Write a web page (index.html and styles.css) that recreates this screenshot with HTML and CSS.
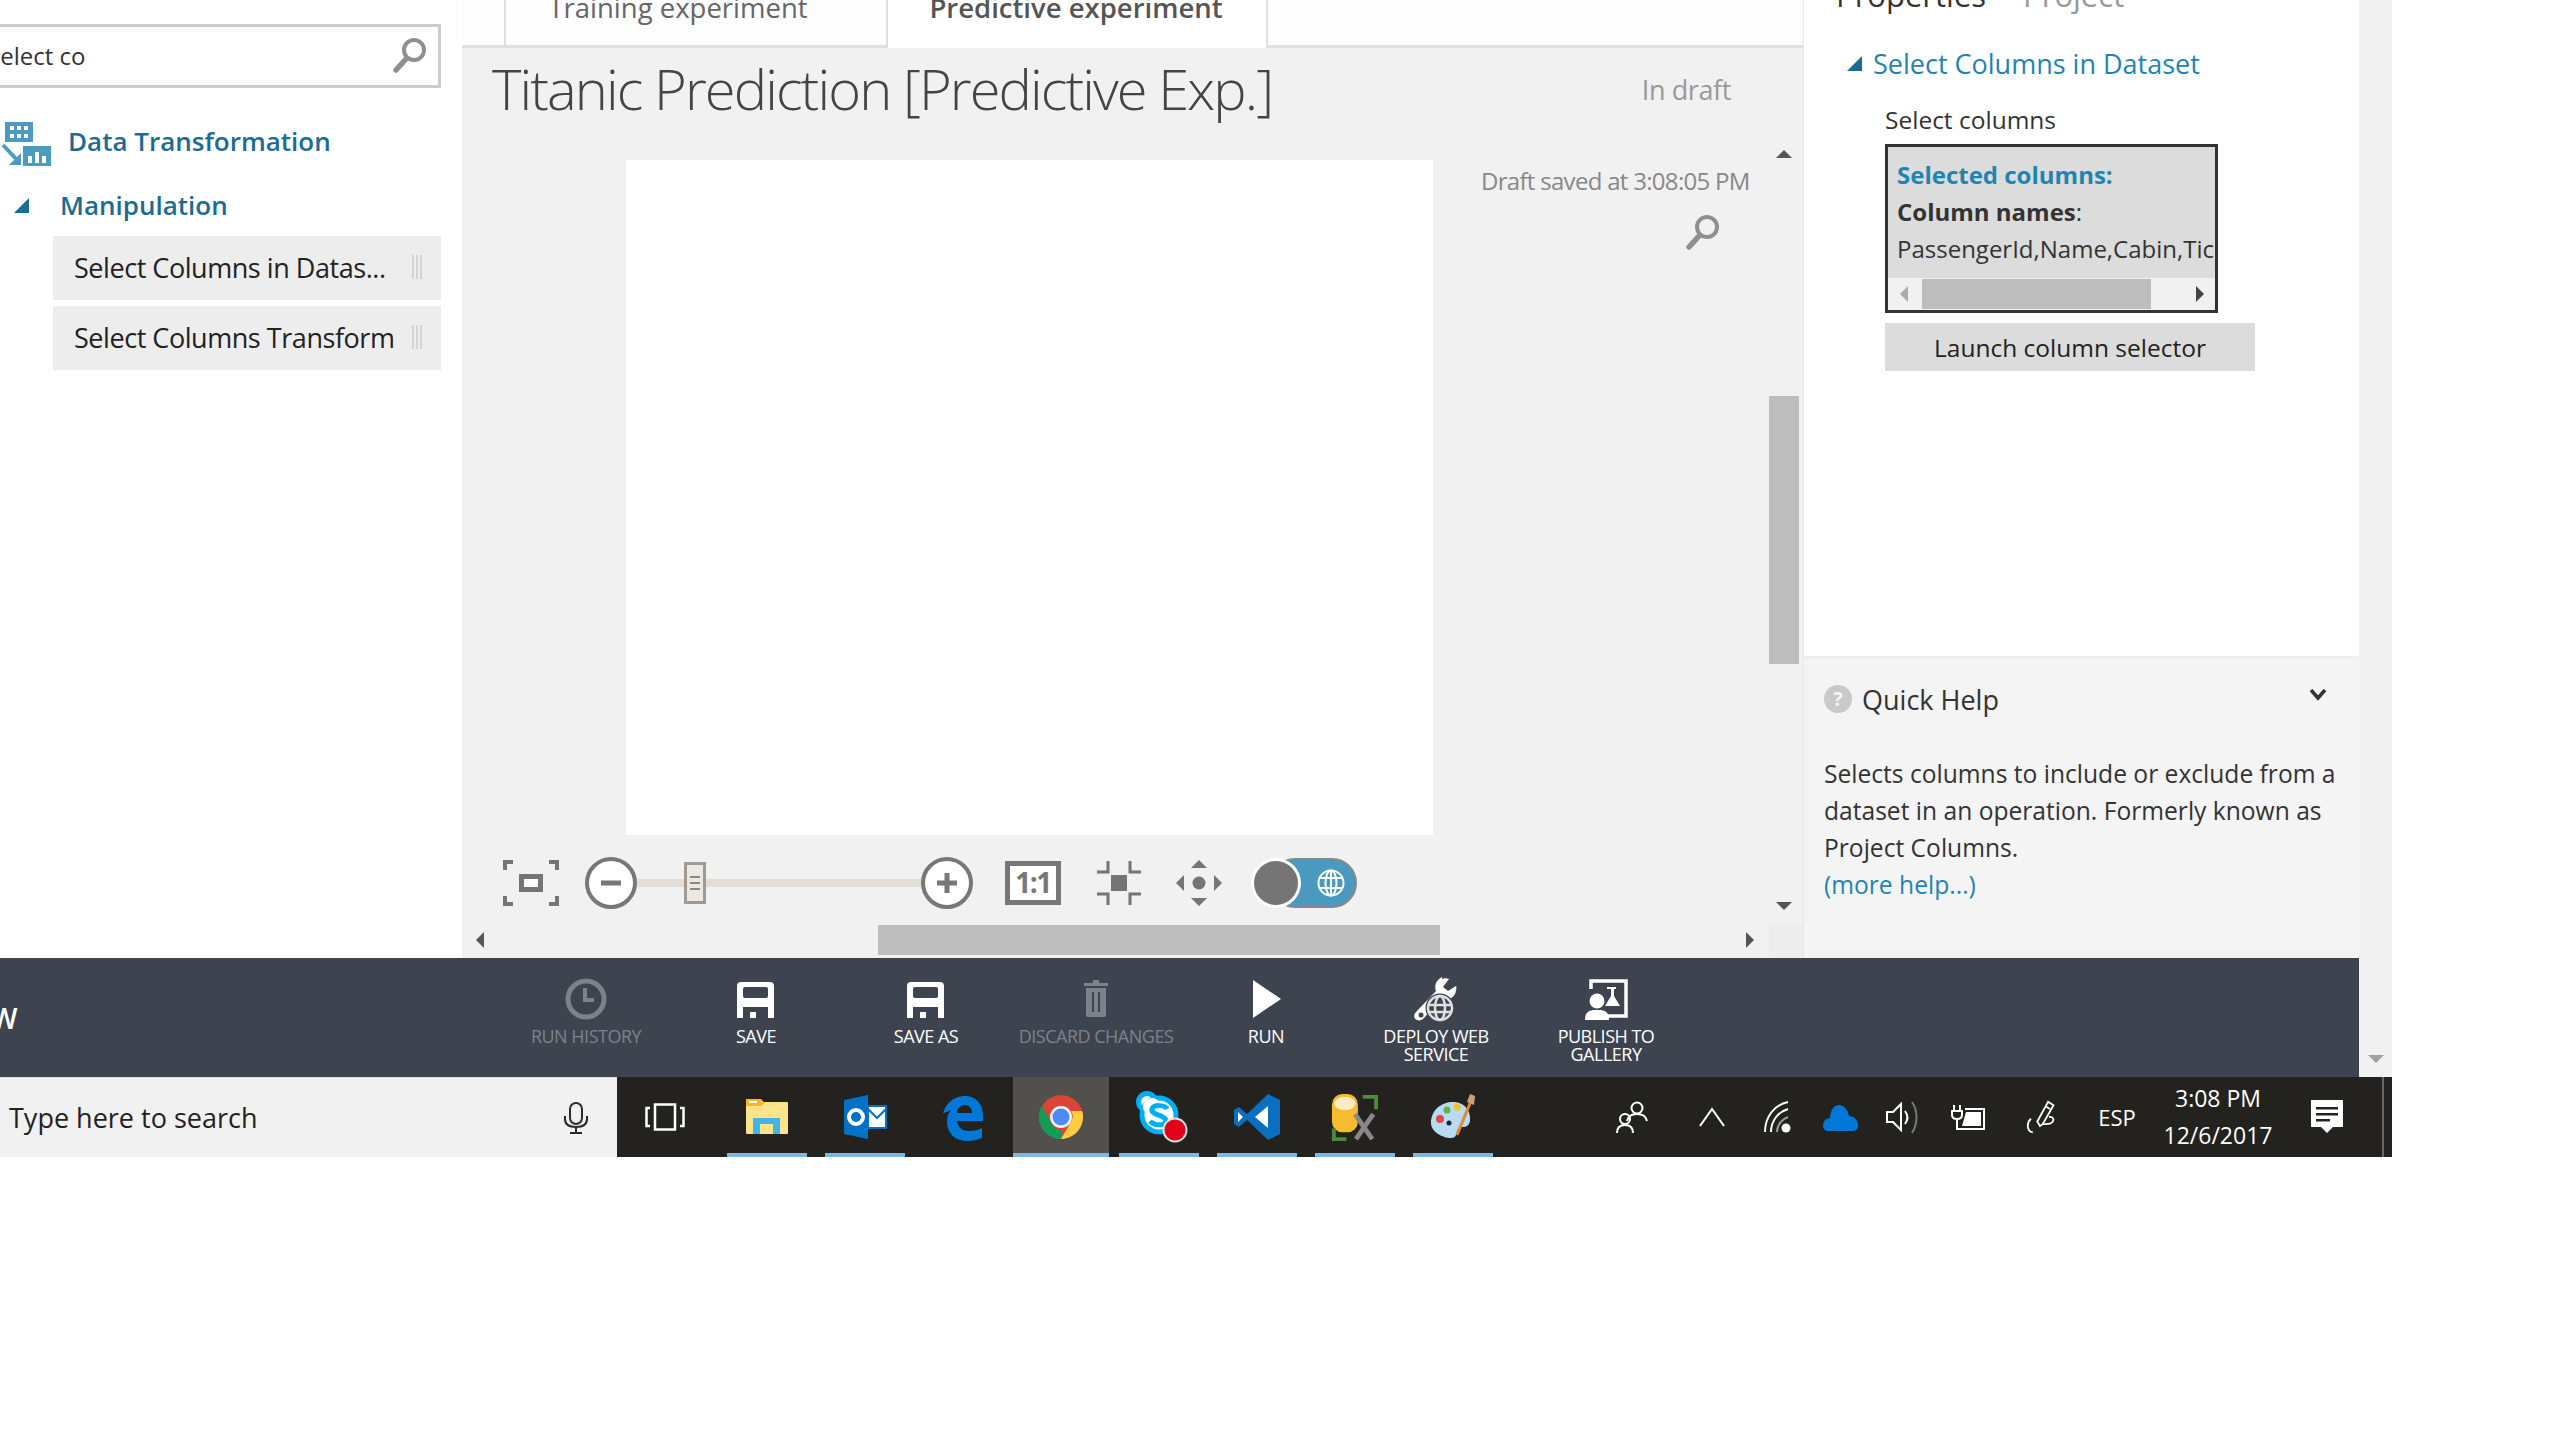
FILE: index.html
```html
<!DOCTYPE html>
<html lang="en">
<head>
<meta charset="utf-8">
<title>Titanic Prediction [Predictive Exp.]</title>
<link rel="stylesheet" href="styles.css">
</head>
<body>
<div class="screen">
  <div class="upper">
    <div class="workspace">
      <div class="main">
        <aside class="sidebar">
          <div class="searchbox">
            <span class="searchtext">Select co</span>
            <svg class="ic-search" viewBox="0 0 36 36"><circle cx="22" cy="13" r="10" fill="none" stroke="#8f8f8f" stroke-width="4"/><path d="M14 22 4 33" stroke="#8f8f8f" stroke-width="5.5" stroke-linecap="round"/></svg>
          </div>
          <div class="cat">
            <svg class="ic-cat" viewBox="0 0 51 46"><path fill="#4c9bc1" d="M5 0h28v20H5zM23 24h28v20H23z"/><path fill="#fff" d="M10 4h4v4h-4zM17 4h4v4h-4zM24 4h4v4h-4zM10 12h4v4h-4zM17 12h4v4h-4zM24 12h4v4h-4zM28 34h4v7h-4zM35 30h4v11h-4zM42 34h4v7h-4z"/><path d="M3 23 19 40" stroke="#4c9bc1" stroke-width="4"/><path fill="#4c9bc1" d="M21 43H9l12-12z"/></svg>
            <span class="cat-label">Data Transformation</span>
          </div>
          <div class="subcat">
            <svg class="tri" viewBox="0 0 15 15"><path fill="#1c6c91" d="M0 15h15V0z"/></svg>
            <span class="sub-label">Manipulation</span>
          </div>
          <div class="module"><span>Select Columns in Datas...</span><i class="grip"></i></div>
          <div class="module"><span>Select Columns Transform</span><i class="grip"></i></div>
        </aside>

        <section class="center">
          <nav class="tabs">
            <div class="tab">Training experiment</div>
            <div class="tab tab-active">Predictive experiment</div>
          </nav>
          <div class="stage">
            <div class="stage-main">
              <header class="titlebar">
                <h1 class="title">Titanic Prediction [Predictive Exp.]</h1>
                <span class="status">In draft</span>
              </header>
              <div class="canvas-row">
                <div class="canvas"></div>
                <div class="draft">
                  <div class="saved">Draft saved at 3:08:05 PM</div>
                  <svg class="ic-search2" viewBox="0 0 36 36"><circle cx="22" cy="13" r="10" fill="none" stroke="#8f8f8f" stroke-width="4"/><path d="M14 22 4 33" stroke="#8f8f8f" stroke-width="5.5" stroke-linecap="round"/></svg>
                </div>
              </div>
              <div class="tools">
                <svg class="t-fit" viewBox="0 0 56 46"><path fill="none" stroke="#757575" stroke-width="4" d="M2 10V2h8M46 2h8v8M2 36v8h8M46 44h8v-8"/><rect x="18.500" y="16.500" width="19" height="13" fill="#fff" stroke="#757575" stroke-width="5"/></svg>
                <svg class="t-circ" viewBox="0 0 52 52"><circle cx="26" cy="26" r="24" fill="#fff" stroke="#777" stroke-width="4"/><path d="M16 26h20" stroke="#777" stroke-width="5"/></svg>
                <div class="track"><div class="thumb"><i></i><i></i><i></i></div></div>
                <svg class="t-circ" viewBox="0 0 52 52"><circle cx="26" cy="26" r="24" fill="#fff" stroke="#777" stroke-width="4"/><path d="M16 26h20M26 16v20" stroke="#777" stroke-width="5"/></svg>
                <div class="t-one">1:1</div>
                <svg class="t-focus" viewBox="0 0 44 44"><rect x="14" y="14" width="16" height="16" fill="#757575"/><path fill="none" stroke="#757575" stroke-width="3" d="M11 0v11H0M33 0v11h11M11 44V33H0M33 44V33h11"/></svg>
                <svg class="t-pan" viewBox="0 0 46 46"><g fill="#757575"><circle cx="23" cy="23" r="6.500"/><path d="M23 0l8 8H15zM23 46l-8-8h16zM0 23l8-8v16zM46 23l-8 8V15z"/></g></svg>
                <svg class="t-toggle" viewBox="0 0 106 50"><rect x="20" y="1" width="85" height="48" rx="24" fill="#4a9ac0" stroke="#888" stroke-width="2"/><circle cx="25" cy="25" r="25" fill="#fff"/><circle cx="25" cy="25" r="22" fill="#757575"/><g fill="none" stroke="#fff" stroke-width="2"><circle cx="80" cy="25" r="12.500"/><ellipse cx="80" cy="25" rx="5.500" ry="12.500"/><path d="M68 20h24M68 30h24M80 12v26"/></g></svg>
              </div>
              <div class="hscroll">
                <svg class="arr-h" viewBox="0 0 8 16"><path fill="#555" d="M8 0v16L0 8z"/></svg>
                <div class="hthumb"></div>
                <svg class="arr-h arr-r" viewBox="0 0 8 16"><path fill="#555" d="M0 0v16l8-8z"/></svg>
              </div>
            </div>
            <div class="vscroll">
              <div class="vtrack">
                <svg class="arr-v" viewBox="0 0 16 8"><path fill="#555" d="M0 8h16L8 0z"/></svg>
                <div class="vthumb"></div>
                <svg class="arr-v arr-d" viewBox="0 0 16 8"><path fill="#555" d="M0 0h16L8 8z"/></svg>
              </div>
              <div class="corner"></div>
            </div>
          </div>
        </section>

        <section class="props">
          <div class="props-top">
            <div class="props-head"><span class="ph-a">Properties</span><span class="ph-b">Project</span></div>
            <div class="mod-head">
              <svg class="tri" viewBox="0 0 15 15"><path fill="#1c6c91" d="M0 15h15V0z"/></svg>
              <span class="mod-name">Select Columns in Dataset</span>
            </div>
            <div class="field-label">Select columns</div>
            <div class="selbox">
              <div class="sel-body">
                <div class="sel-title">Selected columns:</div>
                <div class="sel-line"><b>Column names</b>:</div>
                <div class="sel-line">PassengerId,Name,Cabin,Ticket</div>
              </div>
              <div class="sel-scroll">
                <svg class="arr-h arr-l2" viewBox="0 0 8 16"><path fill="#aaa" d="M8 0v16L0 8z"/></svg>
                <div class="sel-thumb"></div>
                <svg class="arr-h arr-r2" viewBox="0 0 8 16"><path fill="#444" d="M0 0v16l8-8z"/></svg>
              </div>
            </div>
            <div class="launch">Launch column selector</div>
          </div>
          <div class="help">
            <div class="help-head">
              <span class="help-q">?</span>
              <span class="help-title">Quick Help</span>
              <svg class="help-chev" viewBox="0 0 18 12"><path fill="none" stroke="#333" stroke-width="3.500" d="M2 1l7 8 7-8"/></svg>
            </div>
            <p class="help-text">Selects columns to include or exclude from a<br>dataset in an operation. Formerly known as<br>Project Columns.<br><a class="help-link">(more help...)</a></p>
          </div>
        </section>
      </div>

      <div class="toolbar">
        <span class="tb-edge">W</span>
        <div class="cmd cmd-off">
          <svg class="cmd-ic" viewBox="0 0 48 48"><circle cx="24" cy="24" r="18" fill="none" stroke="#7d828a" stroke-width="5"/><path d="M23 13v12h9" fill="none" stroke="#7d828a" stroke-width="4"/></svg>
          <span>RUN HISTORY</span>
        </div>
        <div class="cmd">
          <svg class="cmd-ic" viewBox="-5 -7 48 48"><path fill="#fff" fill-rule="evenodd" d="M4 0h29q4 0 4 4v32H31V25H6v11H0V4q0-4 4-4zM8 5q-2 0-2 2v7q0 2 2 2h21q2 0 2-2V7q0-2-2-2zM13 30h6v6h-6z"/></svg>
          <span>SAVE</span>
        </div>
        <div class="cmd">
          <svg class="cmd-ic" viewBox="-5 -7 48 48"><path fill="#fff" fill-rule="evenodd" d="M4 0h29q4 0 4 4v32H31V25H6v11H0V4q0-4 4-4zM8 5q-2 0-2 2v7q0 2 2 2h21q2 0 2-2V7q0-2-2-2zM13 30h6v6h-6z"/></svg>
          <span>SAVE AS</span>
        </div>
        <div class="cmd cmd-off">
          <svg class="cmd-ic" viewBox="0 0 48 48"><path fill="#7d828a" fill-rule="evenodd" d="M21 5h6v3h9v3H12V8h9zM14 13h20v27q0 2-2 2H16q-2 0-2-2zM20 17v20h2V17zM26 17v20h2V17z"/></svg>
          <span>DISCARD CHANGES</span>
        </div>
        <div class="cmd">
          <svg class="cmd-ic" viewBox="0 0 48 48"><path fill="#fff" d="M11 5v38l28-19z"/></svg>
          <span>RUN</span>
        </div>
        <div class="cmd">
          <svg class="cmd-ic" viewBox="0 0 48 48"><path fill="#fff" d="M30 2c-6 3-8 9-6 14L4 37c-3 3-2 7 1 8s5 0 7-2l11-12 5-7c6 3 12 0 15-5 1-3 2-6 1-8l-8 5-5-4 6-8c-2-1-5-1-7 0z"/><circle cx="9" cy="40" r="2.500" fill="#3d4450"/><circle cx="28" cy="33" r="14.500" fill="#3d4450"/><g fill="none" stroke="#dfe0e2" stroke-width="2.500"><circle cx="28" cy="33" r="12"/><ellipse cx="28" cy="33" rx="5" ry="12"/><path d="M16 30h24M16 37h24"/></g></svg>
          <span>DEPLOY WEB<br>SERVICE</span>
        </div>
        <div class="cmd">
          <svg class="cmd-ic" viewBox="0 0 48 48"><path fill="none" stroke="#fff" stroke-width="3.500" d="M9 14V6h35v35H25"/><path fill="#fff" d="M25 12h9v2h-2v7l6 10H23l6-10v-7h-4z"/><circle cx="15" cy="26" r="7.500" fill="#fff"/><path fill="#fff" d="M3 45c0-7 3-9 8-10h8c5 1 8 3 8 10z"/></svg>
          <span>PUBLISH TO<br>GALLERY</span>
        </div>
      </div>
    </div>
    <div class="outer-scroll">
      <svg class="arr-v" viewBox="0 0 16 8"><path fill="#a0a0a0" d="M0 0h16L8 8z"/></svg>
    </div>
  </div>

  <footer class="taskbar">
    <div class="ts-search">
      <span class="ts-text">Type here to search</span>
      <svg class="ts-mic" viewBox="0 0 24 32"><g fill="none" stroke="#2a2a2a" stroke-width="2"><rect x="6" y="1" width="12" height="21" rx="6"/><path d="M1 14v3c0 6 5 8 11 8s11-2 11-8v-3M12 25v6M6 31h12"/></g></svg>
    </div>
    <div class="slot"><svg class="ic-task" viewBox="0 0 40 28"><g fill="none" stroke="#fff" stroke-width="2.500"><rect x="10" y="1.500" width="20" height="25"/><path d="M5 5H1.500v18H5M35 5h3.500v18H35"/></g></svg></div>
    <div class="apps">
      <div class="slot run">
        <svg class="ic-app" viewBox="0 0 48 48"><path fill="#f2b82e" d="M3 6h14l4 4H3z"/><rect x="3" y="9" width="42" height="32" rx="1" fill="#ffe28c"/><path fill="#f2b82e" d="M3 6h15l4 4-4 3H3z"/><rect x="6" y="8" width="8" height="2" fill="#fff"/><path fill="#3fb5ea" d="M10 41V25h27v16h-7V31H17v10z"/></svg>
      </div>
      <div class="slot run">
        <svg class="ic-app" viewBox="0 0 48 48"><path fill="#0072c6" d="M3 7 27 2v44L3 41z"/><circle cx="15" cy="24" r="7" fill="none" stroke="#fff" stroke-width="4"/><rect x="27" y="13" width="18" height="22" fill="#fff" stroke="#0072c6" stroke-width="2"/><path d="M27 16l9 9 9-9" fill="none" stroke="#0072c6" stroke-width="2"/></svg>
      </div>
      <div class="slot">
        <svg class="ic-app" viewBox="0 0 48 48"><path fill="#0078d7" fill-rule="evenodd" d="M4 20C8 8 17 3 26 3c11 0 18 8 18 20v5H18c1 7 6 10 12 10 5 0 10-1 13-3v10c-4 2-9 3-15 3-12 0-20-8-20-19 0-5 1-9 4-12-3 1-6 3-8 3zM18 20h15c0-5-3-8-7-8-4 0-8 3-8 8z"/></svg>
      </div>
      <div class="slot run active">
        <svg class="ic-app" viewBox="0 0 48 48"><circle cx="24" cy="24" r="22" fill="#db4437"/><path fill="#0f9d58" d="M24 46C12 46 2 36 2 24c0-5 1-8 3-11l11 20c2 3 5 4 8 4z"/><path fill="#ffcd40" d="M46 24c0 12-10 22-22 22l11-19c1-3 1-6-1-9h11c1 2 1 4 1 6z"/><circle cx="24" cy="24" r="11" fill="#f1f1f1"/><circle cx="24" cy="24" r="8.500" fill="#4c8bf5"/></svg>
      </div>
      <div class="slot run">
        <svg class="ic-skype" viewBox="-6 0 58 52"><g fill="#fff" stroke="#00aff0" stroke-width="5"><circle cx="11" cy="11" r="8.500"/><circle cx="23" cy="24" r="17"/></g><circle cx="16" cy="16" r="9" fill="#fff"/><path d="M31 18c-2-4-13-5-15 0-2 6 14 6 14 12-1 5-12 5-16 0" fill="none" stroke="#00aff0" stroke-width="5"/><circle cx="39" cy="39" r="12.500" fill="#e3e3e3"/><circle cx="39" cy="39" r="10.500" fill="#e3001b"/></svg>
      </div>
      <div class="slot run">
        <svg class="ic-app" viewBox="0 0 48 48"><path fill="#0b6ebf" d="M35 1 47 7v34l-12 6L14 27l-8 7-5-3V17l5-3 8 7z"/><path fill="#fff" d="M35 13v22l-13-11zM5 19l5 5-5 5z"/></svg>
      </div>
      <div class="slot run">
        <svg class="ic-app" viewBox="0 0 50 50"><rect x="1" y="1" width="27" height="40" rx="11" fill="#f7bb2e"/><ellipse cx="14.500" cy="11" rx="11" ry="7" fill="#f9edc8"/><path fill="none" stroke="#4a8c3a" stroke-width="4" d="M33 4h14v13M3 37v11h13"/><path fill="none" stroke="#888" stroke-width="5" d="M25 22l18 26M44 22 26 48"/></svg>
      </div>
      <div class="slot run">
        <svg class="ic-app" viewBox="0 0 48 48"><path fill="#b8daf2" d="M2 30C2 16 14 8 26 9c10 1 16 9 15 19-2 9-9 4-12 8-2 4-1 9-7 9-8 0-20-6-20-15z"/><circle cx="11" cy="26" r="4" fill="#e0483d"/><circle cx="18" cy="17" r="3.500" fill="#5fb548"/><circle cx="28" cy="14" r="3.500" fill="#f3c02e"/><circle cx="20" cy="30" r="2.500" fill="#223"/><path d="M42 8 28 42" stroke="#e08a2e" stroke-width="3"/><path fill="#c9a27a" d="M38 9l3-8 5 2-1 9z"/></svg>
      </div>
    </div>
    <div class="tray">
      <div class="t80"><svg class="tr" viewBox="0 0 32 36"><g fill="none" stroke="#fff" stroke-width="2"><circle cx="21" cy="9" r="5.500"/><path d="M11 22c1-5 5-7 10-7s9 2 10 7"/><circle cx="9" cy="20" r="5"/><path d="M1 34c0-5 3-8 8-8s8 3 8 8"/></g></svg></div>
      <div class="t80"><svg class="tr" viewBox="0 0 32 36"><path fill="none" stroke="#fff" stroke-width="2" d="M4 27 16 10l12 17"/></svg></div>
      <div class="t52"><svg class="tr" viewBox="0 0 32 36"><g fill="none" stroke="#fff" stroke-width="2"><path d="M3 33C3 18 12 6 26 3"/><path d="M9 33C9 22 16 13 26 10"/><path d="M15 33c0-7 5-13 11-15" stroke="#999"/></g><circle cx="24" cy="29" r="4.500" fill="#fff"/></svg></div>
      <div class="t72"><svg class="tr" viewBox="0 0 36 36"><path fill="#0078d7" d="M6 32C1 32 0 26 2 23c1-3 4-4 6-4 0-7 4-13 9-13s9 5 10 11c5 0 9 4 9 9s-3 6-6 6z"/></svg></div>
      <div class="t54"><svg class="tr" viewBox="0 0 36 36"><g fill="none" stroke="#fff" stroke-width="2"><path d="M2 13h6l8-8v26l-8-8H2z"/><path d="M20 12c3 4 3 9 0 13"/></g><path d="M27 3c6 9 6 21 0 31" fill="none" stroke="#777" stroke-width="2"/></svg></div>
      <div class="t78"><svg class="tr" viewBox="0 0 36 36"><g fill="none" stroke="#fff" stroke-width="2"><path d="M3 6v6M9 6v6M1 12h10v4c0 3-2 4-5 4s-5-1-5-4zM6 20v10h27V10H14"/></g><path fill="#fff" d="M15 13h15v14H11z"/></svg></div>
      <div class="t64"><svg class="tr" viewBox="0 0 36 40"><g fill="none" stroke="#fff" stroke-width="2"><path d="M18 30 15 25 27 3l6 4-12 21zM24 8l5 3"/><path d="M10 37C3 36 3 26 8 22M28 20c5-1 7 4 2 7-2 1-7 1-9 1"/></g></svg></div>
      <div class="t90"><span class="tray-text">ESP</span></div>
      <div class="t112 clock"><span>3:08 PM</span><span>12/6/2017</span></div>
      <div class="t106"><svg class="ic-note" viewBox="0 0 32 34"><path fill="#fff" fill-rule="evenodd" d="M0 0h32v27H22l-6 6-6-6H0zM5 7v2.500h22V7zM5 13v2.500h22V13zM5 19v2.500h14V19z"/></svg></div>
    </div>
    <i class="ts-line"></i>
  </footer>
</div>
</body>
</html>
```

FILE: styles.css
```css
* { box-sizing: border-box; }
html, body { margin: 0; height: 1440px; overflow: hidden; background: #fff; }
body { font-family: "Open Sans", "Noto Sans", sans-serif; color: #333; }
svg { display: block; flex: none; }

.screen { width: 2392px; height: 1157px; display: flex; flex-direction: column; overflow: hidden; }
.upper { display: flex; height: 1077px; }
.workspace { width: 2359px; display: flex; flex-direction: column; }
.main { display: flex; height: 958px; }
.outer-scroll { width: 33px; background: #f1f1f1; display: flex; flex-direction: column; align-items: center; justify-content: flex-end; padding-bottom: 14px; }

/* sidebar */
.sidebar { width: 462px; background: #fff; padding-top: 24px; overflow: hidden; }
.searchbox { width: 475px; height: 64px; margin-left: -34px; border: 3px solid #ccc; display: flex; align-items: center; justify-content: space-between; padding: 0 10px 2px 18px; font-size: 24px; background: #fff; }
.searchtext { color: #333; }
.ic-search { width: 36px; height: 36px; }
.cat { display: flex; align-items: center; margin-top: 34px; height: 46px; padding-left: 0; }
.ic-cat { width: 51px; height: 46px; }
.cat-label { margin: -8px 0 0 17px; font-size: 26px; font-weight: 600; color: #1c6c91; white-space: nowrap; }
.subcat { display: flex; align-items: center; height: 40px; margin-top: 17px; padding-left: 14px; }
.tri { width: 15px; height: 15px; }
.sub-label { margin-left: 31px; font-size: 26px; font-weight: 600; color: #1c6c91; }
.module { width: 388px; height: 64px; margin: 6px 0 0 53px; background: #ededed; display: flex; align-items: center; justify-content: space-between; padding: 0 19px 2px 21px; font-size: 27px; letter-spacing: -0.45px; color: #222; white-space: nowrap; }
.subcat + .module { margin-top: 11px; }
.grip { display: block; width: 10px; height: 24px; background: repeating-linear-gradient(90deg, #d4d4d4 0 2px, #eee 2px 4px); }

/* center */
.center { width: 1341px; background: #f1f1f1; display: flex; flex-direction: column; }
.tabs { height: 48px; flex: none; background: #fdfdfd; border-bottom: 3px solid #e0e0e0; display: flex; padding-left: 42px; }
.tab { width: 382px; height: 46px; border-left: 2px solid #e0e0e0; font-size: 27.500px; line-height: 15px; color: #666; text-align: center; overflow: hidden; white-space: nowrap; padding-right: 36px; }
.tab-active { height: 48px; background: #fff; border-right: 2px solid #e0e0e0; color: #555; font-weight: 600; padding-right: 2px; }
.stage { display: flex; flex: 1; min-height: 0; }
.stage-main { width: 1307px; display: flex; flex-direction: column; }
.titlebar { height: 112px; flex: none; display: flex; justify-content: space-between; padding: 0 38px 33px 30px; align-items: center; }
.title { margin: 0; font-size: 56px; font-weight: 300; letter-spacing: -1.9px; color: #444; white-space: nowrap; }
.status { margin-top: 3px; font-size: 27px; letter-spacing: -0.4px; color: #999; }
.canvas-row { display: flex; flex: none; height: 675px; padding-left: 164px; }
.canvas { width: 807px; background: #fff; }
.draft { margin-left: 48px; padding-top: 6px; }
.saved { font-size: 24px; letter-spacing: -0.7px; color: #888; white-space: nowrap; line-height: 30px; }
.ic-search2 { width: 36px; height: 36px; margin: 18px 0 0 204px; }
.tools { display: flex; align-items: center; flex: none; height: 50px; margin-top: 23px; padding-left: 41px; }
.t-fit { width: 56px; height: 46px; }
.t-circ { width: 52px; height: 52px; }
.t-fit + .t-circ { margin-left: 26px; }
.track { width: 284px; height: 8px; background: #e3dfd8; position: relative; }
.thumb { position: absolute; left: 47px; top: -17px; width: 22px; height: 42px; border: 3px solid #a09a90; background: #ece8e3; display: flex; flex-direction: column; gap: 4px; align-items: center; justify-content: center; }
.thumb i { display: block; width: 10px; height: 2px; background: #8f8a80; }
.t-one { width: 56px; height: 44px; margin-left: 32px; border: 5px solid #777; background: #fff; color: #777; font-size: 28px; letter-spacing: -1.5px; font-weight: 700; line-height: 33px; text-align: center; }
.t-focus { width: 44px; height: 44px; margin-left: 36px; }
.t-pan { width: 46px; height: 46px; margin-left: 35px; }
.t-toggle { width: 106px; height: 50px; margin-left: 29px; }
.hscroll { flex: none; height: 34px; margin-top: 15px; display: flex; align-items: center; padding-left: 14px; }
.arr-h { width: 8px; height: 16px; }
.hthumb { width: 562px; height: 30px; margin-left: 394px; background: #bdbdbd; }
.arr-r { margin-left: 306px; }
.vscroll { width: 34px; display: flex; flex-direction: column; }
.vtrack { flex: 1; display: flex; flex-direction: column; align-items: center; padding: 102px 4px 14px 0; }
.arr-v { width: 16px; height: 8px; }
.vthumb { width: 30px; height: 268px; margin-top: 238px; background: #bdbdbd; }
.arr-d { margin-top: auto; }
.corner { height: 34px; background: #ededed; }

/* properties */
.props { width: 556px; display: flex; flex-direction: column; border-left: 1px solid #e8e8e8; }
.props-top { height: 659px; flex: none; background: #fff; padding-left: 37px; overflow: hidden; border-bottom: 3px solid #eee; }
.props-head { height: 30px; margin: -25px 0 0 -5px; font-size: 31px; line-height: 40px; white-space: nowrap; }
.ph-a { color: #333; }
.ph-b { color: #999; margin-left: 37px; }
.mod-head { display: flex; align-items: center; margin-top: 38px; height: 40px; padding-left: 6px; }
.mod-name { margin-left: 11px; font-size: 27px; font-weight: 500; color: #1f85b0; white-space: nowrap; }
.field-label { margin: 20px 0 0 44px; font-size: 24.500px; line-height: 34px; color: #333; }
.selbox { width: 333px; height: 169px; margin: 7px 0 0 44px; border: 3px solid #333; background: #dcdcdc; display: flex; flex-direction: column; overflow: hidden; }
.sel-body { flex: 1; padding: 9px 0 0 9px; font-size: 24px; line-height: 37px; white-space: nowrap; overflow: hidden; color: #333; }
.sel-title { color: #1f85b0; font-weight: 700; }
.sel-line b { font-weight: 700; }
.sel-scroll { height: 32px; flex: none; background: #f1f1f1; display: flex; align-items: center; padding-left: 12px; }
.sel-thumb { width: 229px; height: 30px; margin-left: 14px; background: #bdbdbd; }
.arr-r2 { margin-left: 45px; }
.launch { width: 370px; height: 48px; margin: 10px 0 0 44px; background: #dcdcdc; font-size: 24.500px; line-height: 50px; text-align: center; color: #222; padding-right: 0; }
.help { flex: 1; background: #f4f4f4; padding: 0 0 0 20px; }
.help-head { display: flex; align-items: center; height: 36px; margin-top: 22px; }
.help-q { width: 28px; height: 28px; border-radius: 50%; background: #c9c9c9; color: #f4f4f4; font-size: 20px; line-height: 28px; text-align: center; font-weight: 700; }
.help-title { margin-left: 10px; font-size: 27px; color: #333; }
.help-chev { width: 18px; height: 12px; margin-left: 310px; margin-top: -8px; }
.help-text { margin: 38px 0 0; font-size: 24.600px; line-height: 37px; color: #333; white-space: nowrap; }
.help-link { color: #1f85b0; }

/* toolbar */
.toolbar { height: 119px; flex: none; background: #3d4450; display: flex; color: #fff; overflow: hidden; }
.tb-edge { width: 492px; flex: none; margin-left: -9px; padding-top: 44px; font-size: 28px; font-weight: 600; line-height: 32px; }
.tb-edge + .cmd { margin-left: 18px; }
.cmd { width: 170px; flex: none; display: flex; flex-direction: column; align-items: center; padding-top: 17px; font-size: 18px; line-height: 18px; text-align: center; font-weight: 400; letter-spacing: -0.5px; }
.cmd-ic { width: 48px; height: 48px; margin-bottom: 4px; }
.cmd-off { color: #7d828a; }

/* taskbar */
.taskbar { height: 80px; flex: none; background: #23221e; display: flex; align-items: stretch; color: #fff; }
.ts-search { width: 617px; flex: none; background: #f1f1f1; border-top: 1px solid #ddd; display: flex; align-items: center; justify-content: space-between; padding: 0 29px 0 9px; }
.ts-text { font-size: 27px; color: #222; }
.ts-mic { width: 24px; height: 32px; }
.slot { width: 96px; flex: none; display: flex; align-items: center; justify-content: center; position: relative; }
.apps { display: flex; gap: 2px; margin-left: 6px; }
.run::after { content: ""; position: absolute; left: 8px; right: 8px; bottom: 0; height: 4px; background: #76b9ed; }
.active { background: #51504c; }
.active::after { left: 0; right: 0; }
.ic-task { width: 40px; height: 28px; }
.ic-app { width: 48px; height: 48px; }
.ic-skype { width: 58px; height: 52px; }
.tray { display: flex; margin-left: 91px; }
.tray > div { display: flex; align-items: center; justify-content: center; flex: none; }
.t52 { width: 52px; } .t54 { width: 54px; } .t64 { width: 64px; } .t72 { width: 72px; }
.t78 { width: 78px; } .t80 { width: 80px; } .t90 { width: 90px; } .t106 { width: 106px; } .t112 { width: 112px; }
.tr { width: 36px; height: 36px; }
.tray-text { font-size: 22px; }
.tray > .clock { flex-direction: column; font-size: 23px; line-height: 37px; white-space: nowrap; }
.ic-note { width: 32px; height: 34px; }
.ts-line { display: block; width: 2px; margin-left: 2px; background: #666; }
```
